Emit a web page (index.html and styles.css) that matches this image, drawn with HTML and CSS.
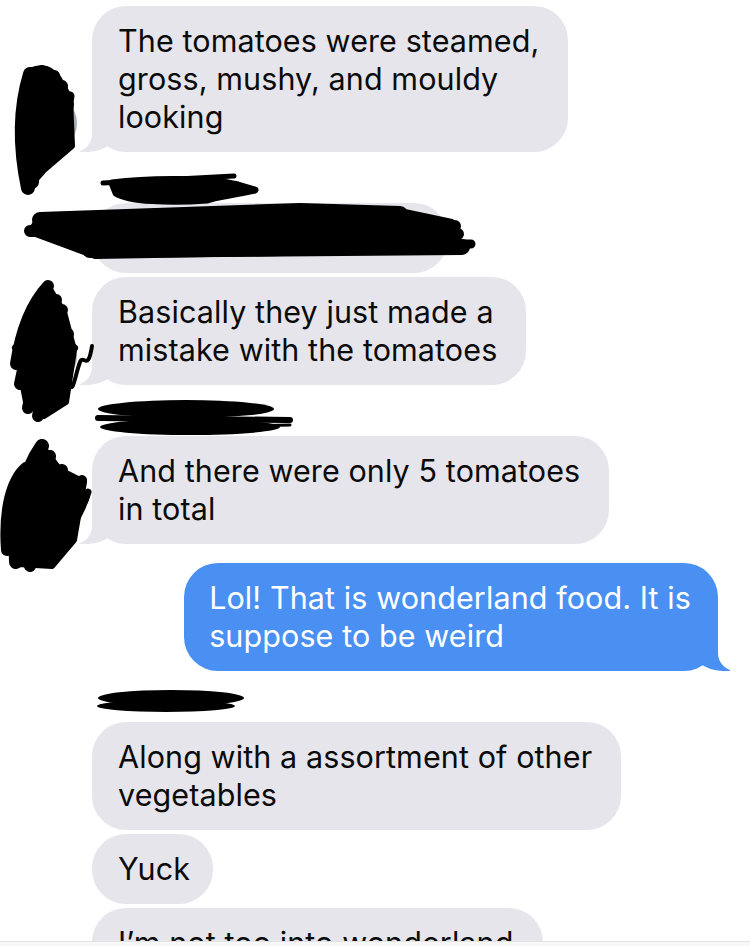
FILE: index.html
```html
<!DOCTYPE html>
<html lang="en">
<head>
<meta charset="utf-8">
<title>Messages</title>
<link rel="stylesheet" href="styles.css">
</head>
<body>
<main class="thread">
  <div class="row in">
    <div class="avatar-slot"><span class="avatar"></span></div>
    <div class="bubble gray tail">The tomatoes were steamed,<br>gross, mushy, and mouldy<br>looking</div>
  </div>
  <div class="name"></div>
  <div class="row in">
    <div class="avatar-slot"></div>
    <div class="bubble gray redacted">&nbsp;</div>
  </div>
  <div class="row in">
    <div class="avatar-slot"><span class="avatar"></span></div>
    <div class="bubble gray tail">Basically they just made a<br>mistake with the tomatoes</div>
  </div>
  <div class="name"></div>
  <div class="row in">
    <div class="avatar-slot"><span class="avatar"></span></div>
    <div class="bubble gray tail">And there were only 5 tomatoes<br>in total</div>
  </div>
  <div class="row out">
    <div class="bubble blue tail">Lol! That is wonderland food. It is<br>suppose to be weird</div>
  </div>
  <div class="name"></div>
  <div class="row in">
    <div class="avatar-slot"></div>
    <div class="bubble gray">Along with a assortment of other<br>vegetables</div>
  </div>
  <div class="row in">
    <div class="avatar-slot"></div>
    <div class="bubble gray short">Yuck</div>
  </div>
  <div class="row in">
    <div class="avatar-slot"></div>
    <div class="bubble gray">I’m not too into wonderland<br>food</div>
  </div>
</main>

<svg class="redactions" width="750" height="946" viewBox="0 0 750 946" aria-hidden="true">
  <g fill="none" stroke="#000" stroke-linecap="round" stroke-linejoin="round">
    <!-- avatar 1 -->
    <path d="M24 90 L34 70 L56 74 L70 98 L72 146 L44 170 L28 188 L21 150 Z" fill="#000" stroke-width="6"/>
    <path d="M28 188 C20 150 19 110 30 74" stroke-width="14"/>
    <path d="M32 182 C33 140 36 100 42 72" stroke-width="14"/>
    <path d="M38 172 C44 130 48 95 54 76" stroke-width="12"/>
    <path d="M45 162 C55 130 60 100 62 86" stroke-width="12"/>
    <path d="M50 152 C62 125 68 112 70 96" stroke-width="9"/>
    <path d="M56 146 C66 128 70 118 71 104" stroke-width="6"/>
    <path d="M30 72 Q48 64 58 80" stroke-width="8"/>
    <!-- name 1 -->
    <path d="M103 183 L234 176" stroke-width="5"/>
    <path d="M112 183 C150 178 210 178 238 185 L255 190 C232 195 214 197 207 200 C170 203 128 201 116 193 Z" fill="#000" stroke-width="7"/>
    <!-- bubble 2 redaction -->
    <path d="M40 216 L300 208 L400 211 L452 222 L462 250 L95 256 L30 232 Z" fill="#000" stroke-width="6"/>
    <path d="M40 220 L300 211 L400 214" stroke-width="16"/>
    <path d="M30 231 L455 226" stroke-width="12"/>
    <path d="M60 236 L458 234" stroke-width="12"/>
    <path d="M90 250 L462 247" stroke-width="16"/>
    <path d="M120 241 L471 244" stroke-width="9"/>
    <!-- avatar 3 -->
    <path d="M16 350 L30 310 L48 286 L64 312 L74 350 L66 402 L44 416 L26 402 Z" fill="#000" stroke-width="6"/>
    <path d="M16 364 C22 324 35 300 48 286" stroke-width="12"/>
    <path d="M20 384 C28 342 42 312 56 300" stroke-width="12"/>
    <path d="M28 408 C36 362 50 322 62 310" stroke-width="12"/>
    <path d="M38 416 C45 380 55 350 68 334" stroke-width="12"/>
    <path d="M48 410 C56 380 64 360 74 348" stroke-width="8"/>
    <path d="M16 348 L42 328" stroke-width="8"/>
    <path d="M56 396 C60 372 66 362 70 382 C72 398 76 372 80 362 C84 354 88 372 92 346" stroke-width="4"/>
    <!-- name 3 -->
    <ellipse cx="186" cy="409" rx="88" ry="9" fill="#000" stroke="none"/>
    <ellipse cx="190" cy="427" rx="90" ry="8" fill="#000" stroke="none"/>
    <path d="M98 418 L290 420" stroke-width="6"/>
    <path d="M240 426 L290 425" stroke-width="3"/>
    <!-- avatar 4 -->
    <path d="M6 530 L26 470 L42 446 L60 470 L84 482 L74 540 L52 566 L18 564 Z" fill="#000" stroke-width="6"/>
    <path d="M7 550 C4 510 12 480 26 468" stroke-width="12"/>
    <path d="M16 562 C14 510 25 470 42 446" stroke-width="14"/>
    <path d="M30 566 C35 520 45 482 50 456" stroke-width="12"/>
    <path d="M45 562 C55 520 60 490 62 470" stroke-width="12"/>
    <path d="M55 556 C70 520 78 496 82 480" stroke-width="10"/>
    <path d="M62 546 C76 520 84 506 88 492" stroke-width="7"/>
    <!-- name 5 -->
    <ellipse cx="171" cy="698" rx="73" ry="8" fill="#000" stroke="none"/>
    <ellipse cx="166" cy="706" rx="69" ry="6" fill="#000" stroke="none"/>
  </g>
</svg>
<div class="toolbar-edge"></div>
</body>
</html>
```
FILE: styles.css
```css
html, body {
  margin: 0;
  padding: 0;
  background: #ffffff;
  overflow: hidden;
  height: 946px;
}

body {
  position: relative;
  font-family: Inter, "Noto Sans", "Liberation Sans", sans-serif;
  -webkit-font-smoothing: antialiased;
}

.thread {
  display: flex;
  flex-direction: column;
  gap: 4px;
  padding-top: 6px;
}

.row {
  display: flex;
  align-items: flex-end;
}

.row.out {
  justify-content: flex-end;
  padding-right: 32px;
  margin-top: 15px;
}

.avatar-slot {
  flex: none;
  width: 92px;
  height: 58px;
  position: relative;
  z-index: 2;
}

.avatar {
  display: block;
  width: 58px;
  height: 58px;
  margin-left: 19px;
  border-radius: 50%;
  background: #a7abb6;
}

.name {
  height: 43px;
}

.bubble {
  position: relative;
  padding: 16px 29px 16px 26px;
  border-radius: 34px;
  font-size: 30.5px;
  line-height: 38px;
  letter-spacing: 0.1px;
  white-space: nowrap;
}

.bubble.short {
  padding-right: 23px;
}

.bubble.gray {
  background: #e6e5eb;
  color: #0b0b0b;
}

.bubble.blue {
  background: #4990f2;
  color: #ffffff;
  padding: 16px 27px 16px 25px;
}

.bubble.redacted {
  width: 301px;
}

.bubble.tail::before,
.bubble.tail::after {
  content: "";
  position: absolute;
  bottom: 0;
  height: 40px;
}

.row.in .bubble.tail::before {
  left: -12px;
  width: 40px;
  background: #e6e5eb;
  border-bottom-right-radius: 32px 28px;
}

.row.in .bubble.tail::after {
  left: -30px;
  width: 30px;
  background: #ffffff;
  border-bottom-right-radius: 18px;
}

.row.out .bubble.tail::before {
  right: -12px;
  width: 40px;
  background: #4990f2;
  border-bottom-left-radius: 32px 28px;
}

.row.out .bubble.tail::after {
  right: -30px;
  width: 30px;
  background: #ffffff;
  border-bottom-left-radius: 18px;
}

.redactions {
  position: absolute;
  top: 0;
  left: 0;
  z-index: 5;
  pointer-events: none;
}

.toolbar-edge {
  position: fixed;
  left: 0;
  right: 0;
  bottom: 0;
  height: 4px;
  background: #f8f8f8;
  border-top: 1px solid #e3e3e3;
  z-index: 6;
}
```
